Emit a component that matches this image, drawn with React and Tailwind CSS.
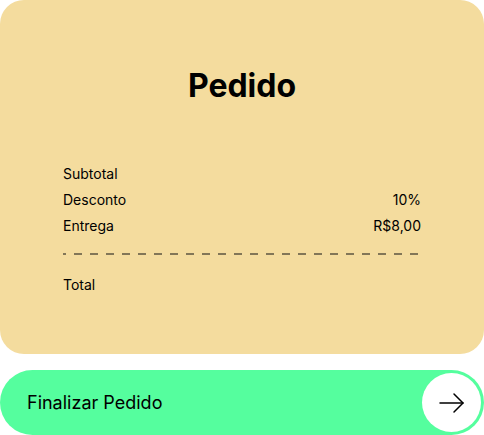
import React from 'react';

const rows = [
  { label: 'Subtotal', value: '' },
  { label: 'Desconto', value: '10%' },
  { label: 'Entrega', value: 'R$8,00' },
];

const App = () => {
  return (
    <div className="w-[484px] h-[435px] flex flex-col gap-4 bg-white font-['Inter',sans-serif] text-black">
      {/* Order card */}
      <div className="h-[354px] rounded-3xl bg-[#f4dc9e] px-[63px] pt-[66px]">
        <h1 className="text-center text-[32px] leading-10 font-bold">Pedido</h1>

        <div className="mt-[58px] flex flex-col gap-[6px] text-sm">
          {rows.map(row => (
            <div key={row.label} className="flex justify-between h-5 leading-5">
              <span>{row.label}</span>
              <span>{row.value}</span>
            </div>
          ))}
        </div>

        <svg className="mt-[17px] block" width="358" height="2">
          <line x1="0" y1="1" x2="358" y2="1" stroke="#111" strokeWidth="1.2" strokeDasharray="8 8" strokeDashoffset="5" />
        </svg>

        <div className="mt-[20px] text-sm leading-5">Total</div>
      </div>

      {/* Checkout button */}
      <button className="h-[65px] rounded-full bg-[#55fe9e] flex items-center justify-between pl-[27px] pr-[3px]">
        <span className="text-lg">Finalizar Pedido</span>
        <span className="w-[59px] h-[59px] rounded-full bg-white flex items-center justify-center">
          <svg width="26" height="22" viewBox="0 0 26 22" fill="none" stroke="#000" strokeWidth="1.5" strokeLinecap="round" strokeLinejoin="round">
            <path d="M1 11h23" />
            <path d="M15 2l9 9-9 9" />
          </svg>
        </span>
      </button>
    </div>
  );
};

export default App;
